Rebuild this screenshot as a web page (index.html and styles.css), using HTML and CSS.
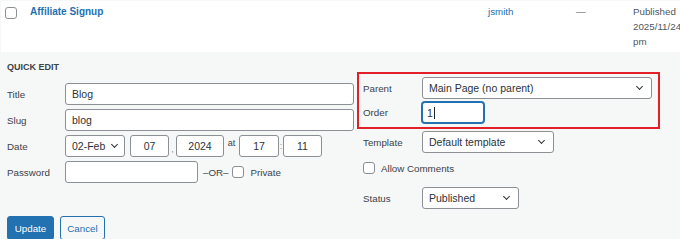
FILE: index.html
```html
<!DOCTYPE html>
<html>

<head>
    <link rel="stylesheet" href="styles.css">
</head>

<body>

    <div class="post-row">
        <div class="col-cb"><span class="checkbox"></span></div>
        <div class="col-title"><a href="#" class="post-title">Affiliate Signup</a></div>
        <div class="col-author"><a href="#">jsmith</a></div>
        <div class="col-comments">—</div>
        <div class="col-date">Published<br>2025/11/24 at 4:12<br>pm</div>
    </div>

    <div class="quick-edit">
        <div class="qe-body">
            <div class="qe-left">
                <div class="qe-head">QUICK EDIT</div>

                <div class="field first">
                    <span class="label">Title</span>
                    <input class="text wide" type="text" value="Blog">
                </div>
                <div class="field">
                    <span class="label">Slug</span>
                    <input class="text wide" type="text" value="blog">
                </div>
                <div class="field">
                    <span class="label">Date</span>
                    <div class="select w-month">02-Feb <i class="chev"></i></div>
                    <input class="text num w-day" type="text" value="07">
                    <span class="sep comma">,</span>
                    <input class="text num w-year" type="text" value="2024">
                    <span class="sep at">at</span>
                    <input class="text num w-hour" type="text" value="17">
                    <span class="sep">:</span>
                    <input class="text num w-min" type="text" value="11">
                </div>
                <div class="field">
                    <span class="label">Password</span>
                    <input class="text w-pass" type="text" value="">
                    <span class="or">–OR–</span>
                    <span class="checkbox"></span>
                    <span class="check-text">Private</span>
                </div>
            </div>

            <div class="qe-right">
                <div class="highlight">
                    <div class="field">
                        <span class="label">Parent</span>
                        <div class="select w-parent">Main Page (no parent) <i class="chev"></i></div>
                    </div>
                    <div class="field order">
                        <span class="label">Order</span>
                        <div class="text focus w-order">1<span class="caret"></span></div>
                    </div>
                </div>
                <div class="field template">
                    <span class="label">Template</span>
                    <div class="select w-template">Default template <i class="chev"></i></div>
                </div>
                <div class="field comments">
                    <span class="checkbox"></span>
                    <span class="check-text">Allow Comments</span>
                </div>
                <div class="field status">
                    <span class="label">Status</span>
                    <div class="select w-status">Published <i class="chev"></i></div>
                </div>
            </div>
        </div>

        <div class="actions">
            <button class="btn primary">Update</button>
            <button class="btn secondary">Cancel</button>
        </div>
    </div>

</body>

</html>
```

FILE: styles.css
```css
* {
    box-sizing: border-box;
}

body {
    margin: 0px;
    padding: 0px;
    background: #f6f7f7;
    font-family: "Liberation Sans", Arial, sans-serif;
    font-size: 9.75px;
    color: #3c434a;
    overflow: hidden;
}

a {
    color: #2271b1;
    text-decoration: none;
}

/* list row */

.post-row {
    display: flex;
    height: 51px;
    margin: 1px 0px 0px 1px;
    padding-top: 3px;
    background: #fff;
    line-height: 15px;
    white-space: nowrap;
}

.col-cb {
    width: 29px;
    padding: 3px 0px 0px 4px;
}

.col-title {
    width: 458px;
}

.post-title {
    font-weight: bold;
    font-size: 10px;
}

.col-author {
    width: 88px;
}

.col-comments {
    width: 57px;
    color: #50575e;
}

.col-date {
    flex: 1;
    overflow: hidden;
    color: #50575e;
}

.checkbox {
    display: inline-block;
    width: 12px;
    height: 12px;
    border: 1px solid #8c8f94;
    border-radius: 3px;
    background: #fff;
    flex: none;
}

/* quick edit */

.quick-edit {
    padding: 8px 0px 0px 7px;
}

.qe-body {
    display: flex;
    align-items: flex-start;
}

.qe-left {
    width: 350px;
}

.qe-head {
    line-height: 15px;
    font-weight: bold;
    font-size: 9px;
    color: #3c434a;
}

.field {
    display: flex;
    align-items: center;
    height: 22px;
    margin-top: 4px;
    white-space: nowrap;
}

.field.first {
    margin-top: 8px;
}

.label {
    width: 58px;
    flex: none;
    color: #3c434a;
}

.text,
.select {
    height: 22px;
    border: 1px solid #8c8f94;
    border-radius: 3px;
    background: #fff;
    font-family: inherit;
    font-size: 10.5px;
    color: #2c3338;
    padding: 0px 6px;
    margin: 0px;
    outline: none;
}

.text.num {
    text-align: center;
}

.select {
    display: flex;
    align-items: center;
    justify-content: space-between;
    padding: 0px 9px 0px 6px;
}

.chev {
    width: 5px;
    height: 5px;
    border-right: 1.3px solid #2c3338;
    border-bottom: 1.3px solid #2c3338;
    transform: rotate(45deg);
    margin-top: -3px;
}

.wide { width: 289px; }
.w-month { width: 60px; padding-left: 6px; padding-right: 7px; }
.w-day { width: 39px; margin-left: 5px; }
.w-year { width: 48px; }
.w-hour { width: 40px; }
.w-min { width: 39px; }
.w-pass { width: 133px; }
.w-parent { width: 230px; }
.w-order { width: 62px; }
.w-template { width: 132px; }
.w-status { width: 97px; }

.sep {
    width: 4px;
    text-align: center;
    color: #8c8f94;
    font-size: 9px;
}

.sep.comma {
    width: 7px;
    margin-top: 6px;
}

.sep.at {
    width: 15px;
    color: #3c434a;
    margin-top: -6px;
}

.or {
    margin: 0px 4px 0px 5px;
}

.check-text {
    margin-left: 6px;
}

/* right column */

.qe-right {
    margin-top: 12px;
}

.highlight {
    width: 303px;
    border: 2px solid #e3202a;
    padding: 3px 6px 4px 4px;
}

.highlight .field:first-child {
    margin-top: 0px;
}

.field.order {
    margin-top: 3px;
    height: 21px;
}

.text.focus {
    display: flex;
    align-items: center;
    height: 21px;
    border-color: #2271b1;
    box-shadow: 0 0 0 1px #2271b1;
    padding-left: 4px;
}

.caret {
    width: 1px;
    height: 12px;
    margin-left: 1px;
    background: #1d2327;
}

.qe-right .field {
    padding-left: 6px;
}

.qe-right .highlight .field {
    padding-left: 0px;
}

.qe-right .label {
    width: 59px;
}

.field.template {
    margin-top: 2px;
}

.field.comments {
    height: 12px;
    margin-top: 9px;
}

.field.status {
    margin-top: 13px;
}

.actions {
    display: flex;
    gap: 6px;
    margin-top: 7px;
}

.btn {
    height: 24px;
    border-radius: 3px;
    font-family: inherit;
    font-size: 9.75px;
    padding: 0px;
}

.btn.primary {
    width: 47px;
    background: #2271b1;
    border: 1px solid #2271b1;
    color: #fff;
}

.btn.secondary {
    width: 45px;
    background: #f6f7f7;
    border: 1px solid #2271b1;
    color: #2271b1;
}
```
